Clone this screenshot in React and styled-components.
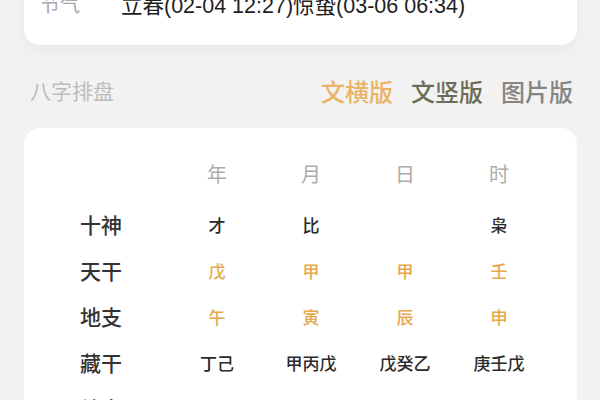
import React from 'react';
import styled, { createGlobalStyle } from 'styled-components';

const GlobalStyle = createGlobalStyle`
  html, body {
    margin: 0;
    padding: 0;
    background: #f2f2f2;
    font-family: "Noto Sans CJK SC", "Noto Sans", sans-serif;
    overflow: hidden;
  }
`;

const COLUMNS = ['年', '月', '日', '时'];

const ROWS = [
  { label: '十神', cells: ['才', '比', '', '枭'] },
  { label: '天干', cells: ['戊', '甲', '甲', '壬'], accent: true },
  { label: '地支', cells: ['午', '寅', '辰', '申'], accent: true },
  { label: '藏干', cells: ['丁己', '甲丙戊', '戊癸乙', '庚壬戊'] },
  { label: '纳音', cells: ['天上火', '大溪水', '覆灯火', '剑锋金'] },
];

const TABS = [
  { name: '文横版', tone: 'active' },
  { name: '文竖版', tone: 'olive' },
  { name: '图片版', tone: 'plain' },
];

const tabColors = {
  active: '#eab366',
  olive: '#6c6c58',
  plain: '#858585',
};

const App = () => (
  <Page>
    <GlobalStyle />
    <InfoCard>
      <InfoRow>
        <InfoLabel>节气</InfoLabel>
        <InfoValue>立春(02-04 12:27)惊蛰(03-06 06:34)</InfoValue>
      </InfoRow>
    </InfoCard>

    <SectionHeader>
      <SectionTitle>八字排盘</SectionTitle>
      <Tabs>
        {TABS.map((tab) => (
          <Tab key={tab.name} tone={tab.tone}>
            {tab.name}
          </Tab>
        ))}
      </Tabs>
    </SectionHeader>

    <BaziCard>
      <Grid>
        <HeadCell />
        {COLUMNS.map((col) => (
          <HeadCell key={col}>{col}</HeadCell>
        ))}
        {ROWS.map((row) => (
          <React.Fragment key={row.label}>
            <RowLabel>{row.label}</RowLabel>
            {row.cells.map((cell, i) => (
              <Cell key={i} accent={row.accent}>
                {cell}
              </Cell>
            ))}
          </React.Fragment>
        ))}
      </Grid>
    </BaziCard>
  </Page>
);

const Page = styled.div`
  padding: 0 23px 0 24px;
  display: flex;
  flex-direction: column;
`;

const InfoCard = styled.div`
  margin-top: -34px;
  padding: 24px 16px 28px;
  background: #fff;
  border-radius: 16px;
  box-shadow: 0 6px 14px rgba(0, 0, 0, 0.04);
`;

const InfoRow = styled.div`
  display: flex;
  align-items: center;
  height: 27px;
`;

const InfoLabel = styled.span`
  width: 81px;
  font-size: 20px;
  color: #a8a8a8;
`;

const InfoValue = styled.span`
  font-family: "Liberation Sans", "Noto Sans CJK SC", sans-serif;
  font-size: 21.5px;
  color: #1e1e1e;
  white-space: nowrap;
`;

const SectionHeader = styled.div`
  height: 76px;
  padding: 7px 4px 0 6px;
  display: flex;
  align-items: center;
  justify-content: space-between;
`;

const SectionTitle = styled.span`
  font-size: 21px;
  color: #bdbdbd;
`;

const Tabs = styled.div`
  display: flex;
  gap: 18px;
`;

const Tab = styled.span`
  font-size: 24px;
  font-weight: 500;
  color: ${(props) => tabColors[props.tone]};
`;

const BaziCard = styled.div`
  background: #fff;
  border-radius: 16px;
  padding: 22px 0 0 8px;
`;

const Grid = styled.div`
  display: grid;
  grid-template-columns: 138px repeat(4, 94px);
  grid-auto-rows: 46px;
  align-items: center;
  justify-items: center;

  & > :nth-child(-n + 5) {
    margin-bottom: -8px;
  }
`;

const HeadCell = styled.div`
  font-size: 20px;
  color: #acacac;
  margin-top: -8px;
`;

const RowLabel = styled.div`
  font-size: 21px;
  font-weight: 500;
  color: #333;
  margin-top: 10px;
`;

const Cell = styled.div`
  font-size: 17px;
  font-weight: 500;
  color: ${(props) => (props.accent ? '#e6a84c' : '#2a2a2a')};
  margin-top: 10px;
`;

App.displayName = 'App';

export default App;
